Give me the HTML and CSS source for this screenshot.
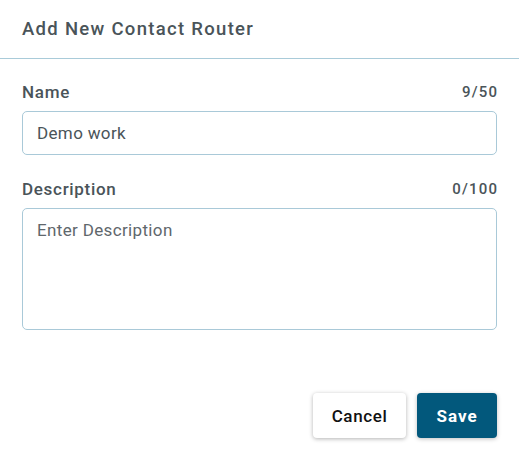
FILE: index.html
```html
<!DOCTYPE html>
<html>
<head>
<meta charset="utf-8">
<link rel="stylesheet" href="styles.css">
</head>
<body>
<div class="dialog">
  <div class="header"><h1 class="title">Add New Contact Router</h1></div>
  <div class="content">
    <div class="field">
      <div class="label-row"><span class="label">Name</span><span class="count">9/50</span></div>
      <input class="input" type="text" value="Demo work">
    </div>
    <div class="field">
      <div class="label-row"><span class="label">Description</span><span class="count">0/100</span></div>
      <textarea class="textarea" placeholder="Enter Description"></textarea>
    </div>
  </div>
  <div class="actions">
    <button class="btn btn-cancel">Cancel</button>
    <button class="btn btn-save">Save</button>
  </div>
</div>
</body>
</html>
```
FILE: styles.css
```css
html, body { margin: 0; padding: 0; background: #ffffff; }
body { font-family: Roboto, "Liberation Sans", sans-serif; color: #4a5459; }
.dialog { width: 519px; height: 456px; display: flex; flex-direction: column; }
.header { height: 59px; border-bottom: 1px solid #a9cbd9; box-sizing: border-box; padding: 0 22px; display: flex; align-items: center; }
.title { margin: 0; font-size: 18.5px; font-weight: 500; letter-spacing: 1.3px; color: #4a5459; }
.content { padding: 23px 22px 0; display: flex; flex-direction: column; gap: 24px; }
.field { display: flex; flex-direction: column; gap: 9px; }
.label-row { display: flex; justify-content: space-between; align-items: center; height: 20px; }
.label { font-size: 17px; font-weight: 500; letter-spacing: 0.7px; }
.count { font-size: 15px; font-weight: 500; letter-spacing: 1.2px; margin-right: -1.2px; }
.input, .textarea { box-sizing: border-box; width: 100%; border: 1px solid #a9c9d8; border-radius: 5px; font-family: Roboto, "Liberation Sans", sans-serif; font-size: 17px; letter-spacing: 0.35px; color: #4a5459; padding: 0 14px; outline: none; margin: 0; }
.input { height: 44px; }
.textarea { height: 122px; padding-top: 11px; resize: none; display: block; }
.textarea::placeholder { color: #5f676c; opacity: 1; }
.actions { margin-top: auto; padding: 0 22px 18px; display: flex; justify-content: flex-end; gap: 11px; }
.btn { height: 45px; border: none; border-radius: 4px; font-family: Roboto, "Liberation Sans", sans-serif; font-size: 17px; font-weight: 500; letter-spacing: 0.6px; cursor: pointer; }
.btn-cancel { width: 93px; background: #ffffff; color: #111111; box-shadow: 0 1px 4px rgba(0,0,0,0.3); }
.btn-save { width: 80px; background: #02587c; color: #ffffff; font-weight: 700; letter-spacing: 1px; box-shadow: 0 1px 4px rgba(0,0,0,0.25); }
```
